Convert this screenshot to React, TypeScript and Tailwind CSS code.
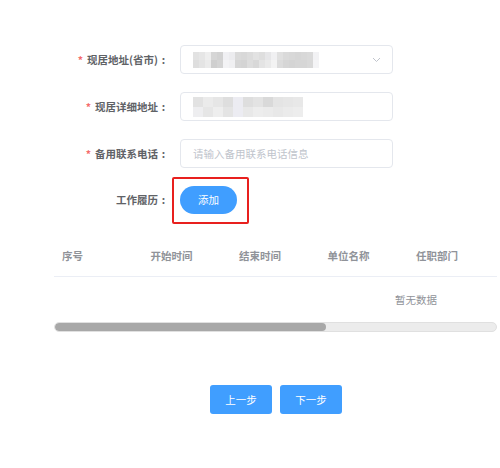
import React from "react";

const font = { fontFamily: '"Noto Sans CJK SC", "Noto Sans", sans-serif' };

const mosaic1: string[][] = [
  ["#e2e2e2", "#e6e6e6", "#eeeeee", "#d6d6d6", "#d2d2d2", "#f0f0f3", "#ececef", "#dadada", "#d8d8d8", "#dcdcdc", "#e2e2e2", "#dedede", "#e6e6e8", "#f0f0f2", "#e0e0e0", "#dadada", "#d8d8d8", "#d6d6d6", "#d8d8d8", "#dadada", "#f2f2f4"],
  ["#dedede", "#e4e4e4", "#ebebeb", "#cfcfcf", "#d4d4d4", "#f3f3f5", "#f0f0f2", "#d6d6d6", "#d4d4d4", "#dddddd", "#d8d8d8", "#e4e4e4", "#eaeaea", "#f3f3f3", "#dcdcdc", "#d6d6d6", "#d4d4d4", "#d6d6d6", "#d6d6d6", "#d9d9d9", "#f4f4f6"],
];

const mosaic2: string[][] = [
  ["#e2e2e2", "#ebebeb", "#e6e6e6", "#dedede", "#ececf2", "#dedede", "#e3e3e3", "#d9d9d9", "#e4e4e4", "#e6e6e6", "#e8e8e8"],
  ["#eeeef0", "#e6e6e6", "#eeeeee", "#e4e4e4", "#ececf2", "#e8e8e8", "#ededed", "#ebebeb", "#e8e8e8", "#ebebeb", "#ededed"],
];

function Label({ text, required }: { text: string; required?: boolean }) {
  return (
    <div className="w-[180px] shrink-0 pr-[11px] flex justify-end items-center text-[10.5px] font-semibold text-[#606266]">
      {required && <span className="text-[#f56c6c] mr-[4px]">*</span>}
      <span>{text}</span>
      <span className="inline-block w-[11px] text-center">:</span>
    </div>
  );
}

export default function App() {
  const headers = ["序号", "开始时间", "结束时间", "单位名称", "任职部门"];
  return (
    <div className="w-[500px] h-[468px] bg-white relative overflow-hidden" style={font}>
      <div className="pt-[45px]">
        {/* Row 1 */}
        <div className="flex items-center h-[29px]">
          <Label text="现居地址(省市)" required />
          <div className="w-[213px] h-[29px] border border-[#e4e7ed] rounded-[4px] flex items-center pl-[12px] pr-[10px] justify-between">
            <div className="flex flex-col">
              {mosaic1.map((row, i) => (
                <div key={i} className="flex">
                  {row.map((c, j) => (
                    <div key={j} className="w-[6px] h-[8px]" style={{ backgroundColor: c }} />
                  ))}
                </div>
              ))}
            </div>
            <svg width="9" height="6" viewBox="0 0 9 6" className="mr-[1px]">
              <path d="M1 1 L4.5 4.5 L8 1" fill="none" stroke="#c0c4cc" strokeWidth="1" />
            </svg>
          </div>
        </div>
        {/* Row 2 */}
        <div className="flex items-center h-[29px] mt-[18px]">
          <Label text="现居详细地址" required />
          <div className="w-[213px] h-[29px] border border-[#e4e7ed] rounded-[4px] flex items-center pl-[12px]">
            <div className="flex flex-col">
              {mosaic2.map((row, i) => (
                <div key={i} className="flex">
                  {row.map((c, j) => (
                    <div key={j} className="w-[10px] h-[10px]" style={{ backgroundColor: c }} />
                  ))}
                </div>
              ))}
            </div>
          </div>
        </div>
        {/* Row 3 */}
        <div className="flex items-center h-[29px] mt-[18px]">
          <Label text="备用联系电话" required />
          <div className="w-[213px] h-[29px] border border-[#e4e7ed] rounded-[4px] flex items-center pl-[12px] text-[10.5px] text-[#c0c4cc]">
            请输入备用联系电话信息
          </div>
        </div>
        {/* Row 4 */}
        <div className="flex items-center h-[28px] mt-[18px]">
          <Label text="工作履历" />
          <div className="relative">
            <button className="w-[57px] h-[28px] rounded-full bg-[#409eff] text-white text-[10.5px] flex items-center justify-center">
              添加
            </button>
            <div className="absolute left-[-8px] top-[-9px] w-[77px] h-[47px] border-2 border-[#e8201e] rounded-[2px]" />
          </div>
        </div>

        {/* Table */}
        <div className="ml-[54px] w-[443px] mt-[21px]">
          <div className="flex h-[42px] items-center border-b border-[#ebeef5]">
            {headers.map((h) => (
              <div key={h} className="w-[88.5px] shrink-0 pl-[8px] text-[10.5px] font-semibold text-[#909399]">
                {h}
              </div>
            ))}
          </div>
          <div className="h-[45px] flex items-center">
            <span className="ml-[341px] text-[10.5px] text-[#909399]">暂无数据</span>
          </div>
          <div className="h-[10px] rounded-full bg-[#ececec] border border-[#e0e0e0] relative overflow-hidden">
            <div className="h-full w-[271px] rounded-full bg-[#a8a8a8]" />
          </div>
        </div>

        {/* Bottom buttons */}
        <div className="flex ml-[210px] mt-[53px] gap-[8px]">
          <button className="w-[62px] h-[29px] rounded-[3px] bg-[#409eff] text-white text-[10.5px] flex items-center justify-center">
            上一步
          </button>
          <button className="w-[62px] h-[29px] rounded-[3px] bg-[#409eff] text-white text-[10.5px] flex items-center justify-center">
            下一步
          </button>
        </div>
      </div>
    </div>
  );
}
